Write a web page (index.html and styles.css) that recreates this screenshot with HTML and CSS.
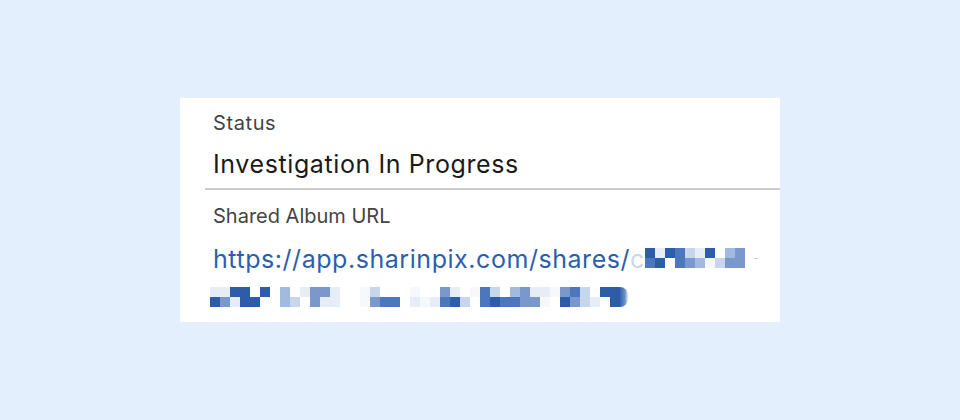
FILE: index.html
```html
<!DOCTYPE html>
<html lang="en">
<head>
<meta charset="utf-8">
<title>Record detail</title>
<link rel="stylesheet" href="styles.css">
</head>
<body>
<section class="card">
  <div class="field field-divided">
    <div class="label">Status</div>
    <div class="value">Investigation In Progress</div>
  </div>
  <div class="field">
    <div class="label">Shared Album URL</div>
    <div class="url-line">
      <a class="link" href="#">https://app.sharinpix.com/shares/<span class="fade">c</span></a>
      <span class="px px-first">
        <i class="s6"></i><i class="s5"></i>
        <i class="s1"></i><i class="s6"></i>
        <i class="s6"></i><i class="s0"></i>
        <i class="s5"></i><i class="s5"></i>
        <i class="s2"></i><i class="s4"></i>
        <i class="s1"></i><i class="s3"></i>
        <i class="s6"></i><i class="sf"></i>
        <i class="s0"></i><i class="s2"></i>
        <i class="s3"></i><i class="s4"></i>
        <i class="s4"></i><i class="s4"></i>
      </span>
      <span class="dash"></span>
    </div>
    <div class="px-line">
      <span class="px">
        <i class="s1"></i><i class="s6"></i>
        <i class="s1"></i><i class="s4"></i>
        <i class="s6"></i><i class="s1"></i>
        <i class="s6"></i><i class="s6"></i>
        <i class="s0"></i><i class="s6"></i>
        <i class="s6"></i><i class="s0"></i>
        <i class="s0"></i><i class="s0"></i>
        <i class="s3"></i><i class="s3"></i>
        <i class="s0"></i><i class="s2"></i>
        <i class="s1"></i><i class="s0"></i>
        <i class="s4"></i><i class="s4"></i>
        <i class="s4"></i><i class="s1"></i>
        <i class="s1"></i><i class="s1"></i>
        <i class="s0"></i><i class="s0"></i>
        <i class="s0"></i><i class="s0"></i>
        <i class="sf"></i><i class="sf"></i>
        <i class="s2"></i><i class="s4"></i>
        <i class="s0"></i><i class="s5"></i>
        <i class="s0"></i><i class="s5"></i>
        <i class="s0"></i><i class="s0"></i>
        <i class="sf"></i><i class="s1"></i>
        <i class="s0"></i><i class="sf"></i>
        <i class="s0"></i><i class="s1"></i>
        <i class="s4"></i><i class="s5"></i>
        <i class="s1"></i><i class="s6"></i>
        <i class="s0"></i><i class="s2"></i>
        <i class="sf"></i><i class="s0"></i>
        <i class="s5"></i><i class="s5"></i>
        <i class="s2"></i><i class="s6"></i>
        <i class="s0"></i><i class="s5"></i>
        <i class="s3"></i><i class="s5"></i>
        <i class="s4"></i><i class="s4"></i>
        <i class="s1"></i><i class="s4"></i>
        <i class="s1"></i><i class="sf"></i>
        <i class="sf"></i><i class="s0"></i>
        <i class="s4"></i><i class="s6"></i>
        <i class="s5"></i><i class="s4"></i>
        <i class="s2"></i><i class="s2"></i>
        <i class="s0"></i><i class="s1"></i>
        <i class="s6"></i><i class="s0"></i>
        <i class="s6"></i><i class="s6"></i>
      </span>
      <span class="paren"></span>
    </div>
  </div>
</section>
</body>
</html>
```

FILE: styles.css
```css
html, body {
  margin: 0;
  padding: 0;
}

body {
  background: #e3effd;
  width: 960px;
  height: 420px;
  font-family: Inter, "Liberation Sans", Arial, sans-serif;
  -webkit-font-smoothing: antialiased;
}

.card {
  box-sizing: border-box;
  width: 600px;
  height: 224px;
  margin: 98px 0 0 180px;
  background: #ffffff;
  padding: 13px 0 0 25px;
}

.field {
  padding-left: 8px;
}

.field-divided {
  border-bottom: 2px solid #cbcbcb;
  padding-bottom: 8px;
}

.label {
  font-size: 20px;
  line-height: 24px;
  color: #444444;
}

.label:first-child {
  letter-spacing: 0.6px;
}

.value {
  margin-top: 13px;
  font-size: 25px;
  line-height: 32px;
  letter-spacing: 0.6px;
  color: #1b1b1b;
}

.field + .field .label {
  margin-top: 14px;
  letter-spacing: 0;
}

.url-line {
  display: flex;
  align-items: flex-start;
  margin-top: 16px;
  height: 40px;
}

.link {
  font-size: 25px;
  line-height: 30px;
  letter-spacing: 0.55px;
  color: #2b5fae;
  text-decoration: none;
  white-space: nowrap;
}

.fade {
  color: #c9d6ea;
}

.px {
  display: grid;
  grid-template-rows: 10px 10px;
  grid-auto-flow: column;
  grid-auto-columns: 10px;
}

.px-first {
  margin-top: 4px;
}

.px i {
  display: block;
}

.dash {
  width: 4px;
  height: 1px;
  margin: 14px 0 0 9px;
  background: #c4d2e8;
}

.px-line {
  display: flex;
  align-items: flex-start;
  margin: 3px 0 0 -3px;
}

.paren {
  width: 8px;
  height: 20px;
  border-radius: 0 10px 10px 0;
  background: linear-gradient(90deg, #3565b0, #6d8fc8 60%, #dfe7f4);
}

.s0 { background: #ffffff; }
.sf { background: #f6f8fc; }
.s1 { background: #e7edf7; }
.s2 { background: #c8d6ec; }
.s3 { background: #a2badf; }
.s4 { background: #7a98cc; }
.s5 { background: #4d77bd; }
.s6 { background: #2d5ca8; }
```
